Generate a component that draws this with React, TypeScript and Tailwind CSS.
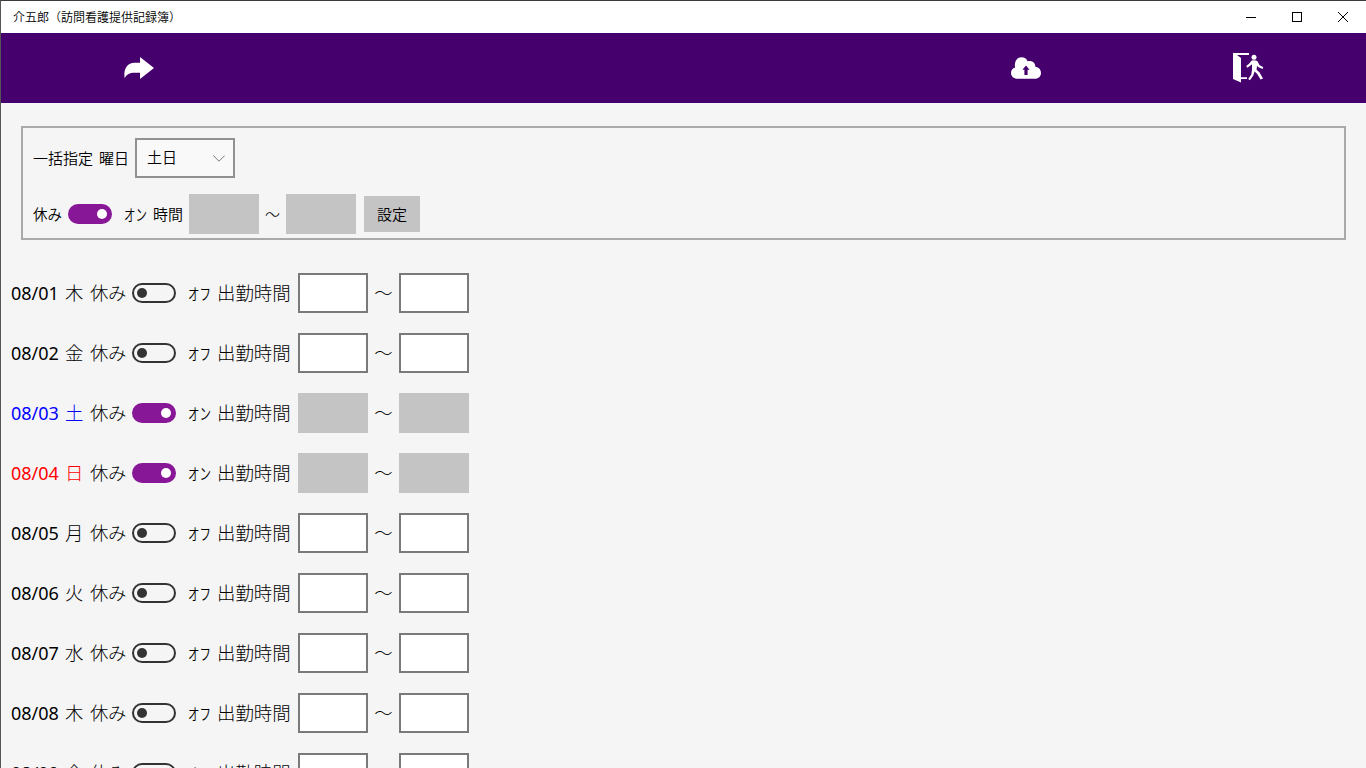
import React, { useState } from 'react';
import clsx from 'clsx';

interface Day {
  date: string;
  weekday: string;
  off: boolean;
}

const initialDays: Day[] = [
  { date: '08/01', weekday: '木', off: false },
  { date: '08/02', weekday: '金', off: false },
  { date: '08/03', weekday: '土', off: true },
  { date: '08/04', weekday: '日', off: true },
  { date: '08/05', weekday: '月', off: false },
  { date: '08/06', weekday: '火', off: false },
  { date: '08/07', weekday: '水', off: false },
  { date: '08/08', weekday: '木', off: false },
  { date: '08/09', weekday: '金', off: false },
];

const Toggle: React.FC<{ on: boolean; onClick: () => void }> = ({ on, onClick }) => (
  <button
    role="switch"
    aria-checked={on}
    onClick={onClick}
    className={clsx(
      'flex h-5 w-11 shrink-0 items-center rounded-full',
      on ? 'justify-end bg-[#881798] pr-[5px]' : 'justify-start border-2 border-[#333333] pl-[3px]'
    )}
  >
    <span className={clsx('size-2.5 rounded-full', on ? 'bg-white' : 'bg-[#333333]')} />
  </button>
);

const TimeBox: React.FC<{ disabled: boolean }> = ({ disabled }) => (
  <input
    disabled={disabled}
    className={clsx(
      'h-10 w-[70px] shrink-0 px-2 outline-none',
      disabled ? 'bg-[#c4c4c4]' : 'border-2 border-[#7a7a7a] bg-white'
    )}
  />
);

// narrow kana, as in the UI font
const SwitchLabel: React.FC<{ on: boolean }> = ({ on }) => (
  <span className="ml-3 w-[23px] shrink-0 text-[16px] font-[350]">
    <span className="inline-block origin-left scale-x-[0.72]">{on ? 'オン' : 'オフ'}</span>
  </span>
);

const TitleBar = () => (
  <header className="flex h-8 items-center justify-between bg-white">
    <div className="pl-3 text-xs">介五郎（訪問看護提供記録簿）</div>
    <div className="flex text-black">
      <button className="flex h-8 w-[46px] items-center justify-center">
        <svg width="10" height="10" stroke="currentColor" shapeRendering="crispEdges">
          <path d="M0 5.5h10" />
        </svg>
      </button>
      <button className="flex h-8 w-[46px] items-center justify-center">
        <svg width="10" height="10" fill="none" stroke="currentColor" shapeRendering="crispEdges">
          <path d="M.5 .5h9v9h-9z" />
        </svg>
      </button>
      <button className="flex h-8 w-[46px] items-center justify-center">
        <svg width="10" height="10" stroke="currentColor">
          <path d="M0 0l10 10M10 0L0 10" />
        </svg>
      </button>
    </div>
  </header>
);

const CommandBar = () => (
  <nav className="flex h-[70px] bg-[#46006e] text-white">
    <button className="ml-[123px] mt-6 h-[22px] w-[30px]">
      <svg width="30" height="22" fill="currentColor">
        <path d="M16 0L30 11L16 22V15.800H10.500C5.500 16 3 17 .7 21.200C-.8 13 2.500 6 10.500 5.800H16z" />
      </svg>
    </button>
    <button className="ml-[857px] mt-6 h-[22px] w-[30px]">
      <svg width="30" height="22">
        <path
          fill="currentColor"
          d="M6.500 21.700C2.800 21.700 0 19.300 0 15.900C0 13.300 1.600 11.300 4.100 10.500C3 4.500 6 .2 10.500 .2C13.600 .2 15.500 1.700 16.600 4.300C20.200 3 24.200 5 24.400 9.800C28 10.500 30 12.700 30 15.900C30 19.300 27.400 21.700 24 21.700z"
        />
        <path fill="#46006e" d="M15 8.500L18.600 12.800H16.600V18H13.400V12.800H11.400z" />
      </svg>
    </button>
    <button className="ml-[192px] mt-5 h-[30px] w-[31px]">
      <svg width="31" height="30" fill="currentColor">
        <path d="M0 0H16V2H4L8 5V24.200H14V26H8V29.500L0 26z" />
        <circle cx="21" cy="4.300" r="2.500" />
        <path d="M18.500 7.700C20 7.200 22.500 7.200 24.300 8L26.500 12L30.300 14.200L29.500 16L25 14L24 12.800L23.600 16.800L26.600 19.500L30 25.500L27.600 26.500L24 20.800L21.600 18.600L20.300 22.500L17 27.200L15.200 26L18.300 21.500L19 16.500V11.300L17.200 12.800L14.200 14.700L13.200 13L16 10.800z" />
      </svg>
    </button>
  </nav>
);

const App: React.FC = () => {
  const [days, setDays] = useState(initialDays);
  const [bulkOff, setBulkOff] = useState(true);

  const toggleDay = (date: string) => {
    setDays(days.map((d) => (d.date === date ? { ...d, off: !d.off } : d)));
  };

  return (
    <div className="h-screen overflow-hidden border-l border-t border-l-[#555555] border-t-[#3b3b3b] bg-[#f5f5f5] font-['Noto_Sans_CJK_JP',sans-serif] font-[350] whitespace-nowrap text-black">
      <TitleBar />
      <CommandBar />

      <section className="mx-5 mt-[23px] h-[114px] border-2 border-[#a9a9a9] pl-2.5 pt-2.5 text-[15px]">
        <div className="flex h-10 items-center">
          <span className="w-[66px]">一括指定</span>
          <span className="w-9">曜日</span>
          <button className="flex h-10 w-[100px] items-center justify-between border-2 border-[#919191] bg-[#f9f9f9] pl-2.5 pr-2">
            <span className="pb-0.5">土日</span>
            <svg width="12" height="7" fill="none" stroke="#777777">
              <path d="M.3 .5L6 6.200L11.700 .5" />
            </svg>
          </button>
        </div>
        <div className="mt-4 flex h-10 items-center">
          <span className="w-[35px] text-[14.5px]">休み</span>
          <Toggle on={bulkOff} onClick={() => setBulkOff(!bulkOff)} />
          <SwitchLabel on={bulkOff} />
          <span className="ml-1.5 w-9">時間</span>
          <TimeBox disabled={bulkOff} />
          <span className="w-[27px] text-center font-light">～</span>
          <TimeBox disabled={bulkOff} />
          <button className="ml-2 h-9 w-14 bg-[#c4c4c4]">設定</button>
        </div>
      </section>

      <main className="pl-2.5 pt-[23px] text-[18.4px] font-light">
        {days.map((day) => (
          <div key={day.date} className="flex h-[60px] items-center">
            <div
              className={clsx(
                'flex items-center',
                day.weekday === '土' && 'text-[#0000ff]',
                day.weekday === '日' && 'text-[#ff0000]'
              )}
            >
              <span className="w-[54px] pt-px font-['Noto_Sans',sans-serif] text-[18px] font-normal">{day.date}</span>
              <span className="w-[25px]">{day.weekday}</span>
            </div>
            <span className="w-[42px] tracking-[-0.4px]">休み</span>
            <Toggle on={day.off} onClick={() => toggleDay(day.date)} />
            <SwitchLabel on={day.off} />
            <span className="ml-1.5 w-[81px]">出勤時間</span>
            <TimeBox disabled={day.off} />
            <span className="w-[31px] text-center">～</span>
            <TimeBox disabled={day.off} />
          </div>
        ))}
      </main>
    </div>
  );
};

export default App;
